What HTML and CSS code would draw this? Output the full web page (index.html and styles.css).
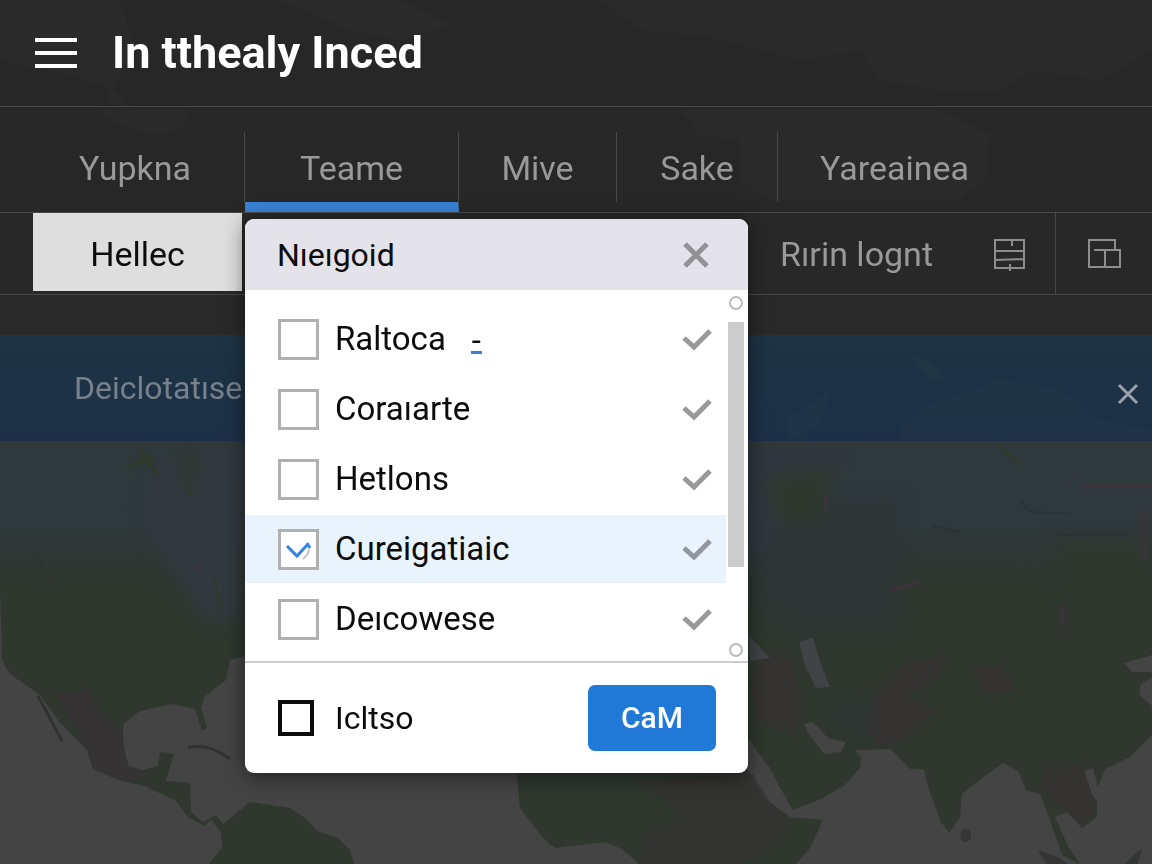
FILE: index.html
```html
<!DOCTYPE html>
<html lang="en">
<head>
    <meta charset="UTF-8">
    <meta name="viewport" content="width=device-width, initial-scale=1.0">
    <title>In tthealy Inced</title>
    <link rel="stylesheet" href="styles.css">
</head>
<body>
    <!-- map behind everything -->
    <svg class="map" viewBox="0 0 1152 864" preserveAspectRatio="xMidYMin slice" aria-hidden="true">
        <defs>
            <linearGradient id="north" x1="0" y1="0" x2="0" y2="1">
                <stop offset="0" stop-color="#30393c"/>
                <stop offset="0.75" stop-color="#2f383b"/>
                <stop offset="1" stop-color="#2f372f"/>
            </linearGradient>
            <filter id="soft" x="-20%" y="-20%" width="140%" height="140%" color-interpolation-filters="sRGB">
                <feGaussianBlur stdDeviation="8"/>
            </filter>
        </defs>
        <rect width="1152" height="864" fill="#444444"/>
        <path fill="#7a7a7a" d="M0 0H120L135 50L105 100L130 110L115 90L70 75L0 60ZM280 0H400L450 25L400 40L350 30ZM600 0H1152V50L1100 80L1030 70L1000 90H940L880 80L860 50L800 60L700 35L640 30ZM680 110H940L990 135L985 180L960 200H860L770 200L740 180L740 140L700 135ZM95 110H190L180 130L150 135L120 125Z"/>
        <rect y="330" width="1152" height="260" fill="url(#north)"/>
        <path fill="#4b5638" d="M900 430L930 405L960 395L1000 380L1060 390L1100 420L1152 430V440H900ZM908 355L930 362L945 378L930 380ZM785 420L810 405L830 390L820 425L790 440Z"/>
        <path fill="#2f372f" d="M0 588H250V655L230 660L226 680L204 697L201 708L207 728L202 731L195 709L172 704L140 711L124 723L122 745L129 766L143 770L158 766L160 752L174 754L166 781L190 783L191 812L203 822L216 815L223 824L250 802L290 808L305 818L317 831L338 838L350 850L354 864H209L222 848L221 832L211 820L204 826L188 817L176 801L145 786L118 780L93 769L87 750L60 723L40 695L10 674L2 660Z"/>
        <path fill="#353333" d="M55 692L88 690L100 712L122 732L127 765L150 778L120 780L93 769L87 748Z"/>
        <path fill="none" stroke="#303332" stroke-width="3" d="M38 696L62 741M188 748Q208 742 230 759M37 557L51 580"/>
        <path fill="#2f372f" d="M740 585H1152V735L1130 757L1105 769L1098 787L1093 768L1082 772L1083 786L1097 801L1097 817L1082 828L1067 812L1055 817L1068 846L1080 864L1062 855L1050 820L1040 794L1026 790L1018 771L1003 763L982 778L962 794L960 817L949 833L941 822L929 790L924 769L910 769L891 749L862 750L845 748L848 742L861 757L860 768L845 785L821 799L793 810L783 793L768 768L750 740L740 748Z"/>
        <path fill="#2f372f" d="M516 770H748L764 798L790 817L823 820L810 848L796 864H639L622 849L605 842L555 848L543 838L520 808Z"/>
        <path fill="#353232" d="M640 780L755 774L770 802L788 820L778 840L740 864H640L645 835L690 820Z" opacity=".7"/>
        <path fill="#353332" d="M765 655L790 658L800 700L795 735L758 720L750 680ZM870 700L902 665L945 655L937 675L910 696L935 711L910 735L880 748L865 725ZM975 668L1000 665L1016 690L985 695ZM1045 768L1082 765L1097 808L1082 826L1058 803L1040 790Z"/>
        <g filter="url(#soft)">
            <path fill="#2d3536" d="M835 700H875V735L848 733L830 725ZM750 500H900V630L800 635L750 610Z" opacity=".7"/>
            <path fill="#31393f" d="M165 450H240V620H205L150 535L145 500Z"/>
            <path fill="#31363f" d="M750 450H840L800 515L770 540L750 570Z"/>
            <path fill="#2f382f" d="M765 475L830 465L825 520L775 525ZM1057 540H1152V600H1060ZM175 450H195V490H185Z"/>
        </g>
        <path fill="#404446" d="M799 642L813 638L820 662L830 687L816 688L804 663ZM748 635L770 658L750 661Z"/>
        <path fill="#444444" d="M748 740L770 768L792 812L770 800L755 779ZM804 724L813 722L828 738L846 742L841 752L824 754L808 733ZM1124 663L1152 655V672H1132ZM1140 685L1152 678V706L1140 695Z"/>
        <path fill="#333635" d="M962 830Q972 826 971 839Q965 846 960 838ZM1038 850L1060 858L1068 864H1046ZM1124 864L1142 848L1138 864Z"/>
        <path fill="none" stroke="#2f3a2b" stroke-width="3" d="M995 443L1020 464M128 467L150 455M140 450L158 475M135 463L155 460M214 577L220 610M185 485L192 495"/>
        <path fill="none" stroke="#2b3238" stroke-width="2" d="M1022 500Q1025 514 1045 513H1068M932 526L960 532M785 530H815M1056 535H1130"/>
        <path fill="none" stroke="#3a343a" stroke-width="4" d="M1083 486H1152M890 590L920 582M1062 604V625M826 495V510M198 562V574M1144 510V560"/>
    </svg>

    <header class="header">
        <button class="menu-button" type="button" aria-label="Menu">
            <span></span>
            <span></span>
            <span></span>
        </button>
        <h1 class="title">In tthealy Inced</h1>
    </header>

    <nav class="tabs">
        <a class="tab" href="#">Yupkna</a>
        <a class="tab tab-active" href="#">Teame</a>
        <a class="tab" href="#">Mive</a>
        <a class="tab" href="#">Sake</a>
        <a class="tab" href="#">Yareainea</a>

        <section class="popup" aria-labelledby="popup-title">
            <div class="popup-header">
                <h2 class="popup-title" id="popup-title">Nıeıgoid</h2>
                <button class="close-button" type="button" aria-label="Close">
                    <svg width="26" height="26" viewBox="0 0 26 26"><path d="M2 2L24 24M24 2L2 24" stroke="#919196" stroke-width="5"/></svg>
                </button>
            </div>

            <div class="popup-body">
                <div class="options">
                    <label class="option">
                        <input class="checkbox" type="checkbox">
                        <span>Raltoca</span>
                        <span class="mark">-</span>
                        <svg class="tick" width="30" height="24" viewBox="0 0 30 24"><path d="M2 11L12 20L28 4" fill="none" stroke="#999" stroke-width="5"/></svg>
                    </label>
                    <label class="option">
                        <input class="checkbox" type="checkbox">
                        <span>Coraıarte</span>
                        <svg class="tick" width="30" height="24" viewBox="0 0 30 24"><path d="M2 11L12 20L28 4" fill="none" stroke="#999" stroke-width="5"/></svg>
                    </label>
                    <label class="option">
                        <input class="checkbox" type="checkbox">
                        <span>Hetlons</span>
                        <svg class="tick" width="30" height="24" viewBox="0 0 30 24"><path d="M2 11L12 20L28 4" fill="none" stroke="#999" stroke-width="5"/></svg>
                    </label>
                    <label class="option option-selected">
                        <input class="checkbox" type="checkbox" checked>
                        <svg class="check" width="41" height="41" viewBox="0 0 41 41">
                            <path d="M9 17L19 27L30 15M29 14L32 19" fill="none" stroke="#3585dc" stroke-width="3"/>
                            <path d="M31 20Q31 25 25 30" fill="none" stroke="#c5c2c6" stroke-width="2"/>
                        </svg>
                        <span>Cureigatiaic</span>
                        <svg class="tick" width="30" height="24" viewBox="0 0 30 24"><path d="M2 11L12 20L28 4" fill="none" stroke="#92979d" stroke-width="5"/></svg>
                    </label>
                    <label class="option">
                        <input class="checkbox" type="checkbox">
                        <span>Deıcowese</span>
                        <svg class="tick" width="30" height="24" viewBox="0 0 30 24"><path d="M2 11L12 20L28 4" fill="none" stroke="#999" stroke-width="5"/></svg>
                    </label>
                </div>
                <div class="scrollbar" aria-hidden="true">
                    <span class="scroll-end"></span>
                    <span class="scroll-thumb"></span>
                    <span class="scroll-end"></span>
                </div>
            </div>

            <div class="popup-footer">
                <label class="footer-option">
                    <input class="checkbox checkbox-dark" type="checkbox">
                    <span>Icltso</span>
                </label>
                <button class="submit-button" type="button">CaM</button>
            </div>
        </section>
    </nav>

    <div class="toolbar">
        <button class="filter-button" type="button">Hellec</button>
        <span class="toolbar-text">Rırin lognt</span>
        <button class="icon-button" type="button" aria-label="Rows">
            <svg width="34" height="34" viewBox="0 0 34 34" fill="none" stroke="#8d8d8d" stroke-width="2">
                <path d="M2 3H31V31H2ZM2 14H31M2 23L31 22M19 3V9M17 27V34"/>
            </svg>
        </button>
        <button class="icon-button icon-button-last" type="button" aria-label="Layout">
            <svg width="34" height="34" viewBox="0 0 34 34" fill="none" stroke="#8d8d8d" stroke-width="2">
                <path d="M27 13V3H1V30H32V13H6M17 13V31"/>
            </svg>
        </button>
    </div>

    <div class="banner">
        <span>Deiclotatıse</span>
        <button class="close-button" type="button" aria-label="Dismiss">
            <svg width="22" height="22" viewBox="0 0 22 22"><path d="M2 2L20 20M20 2L2 20" stroke="#9aa1a8" stroke-width="3"/></svg>
        </button>
    </div>
</body>
</html>
```
FILE: styles.css
```css
* {
    box-sizing: border-box;
}

body {
    font-family: Roboto, 'Liberation Sans', sans-serif;
    font-size: 32px;
    line-height: 40px;
    background-color: #444;
    color: #999;
    min-height: 100vh;
    margin: 0;
    position: relative;
    overflow: hidden;
}

button {
    font: inherit;
    color: inherit;
    background: none;
    border: none;
    padding: 0;
    cursor: pointer;
}

svg {
    display: block;
}

.map {
    position: absolute;
    top: 0;
    left: 0;
    width: 100%;
    height: 100%;
    z-index: -1;
}

.header {
    display: flex;
    align-items: center;
    gap: 35px;
    height: 107px;
    padding: 0 35px;
    background-color: rgba(37, 37, 37, 0.94);
    border-bottom: 1px solid #484848;
}

.menu-button {
    display: flex;
    flex-direction: column;
    gap: 9px;
    width: 42px;
}

.menu-button span {
    height: 4px;
    background-color: #fff;
}

.title {
    margin: 0;
    font-size: 45px;
    font-weight: 700;
    color: #fff;
}

.tabs {
    position: relative;
    display: grid;
    grid-template-columns: 245px 214px 158px 161px auto;
    justify-content: start;
    padding-top: 25px;
    background-color: rgba(37, 37, 37, 0.94);
    border-bottom: 1px solid #484848;
}

.tab {
    padding: 16px 0 14px;
    margin-bottom: 10px;
    border-right: 1px solid #484848;
    color: #999;
    font-size: 34px;
    text-align: center;
    text-decoration: none;
}

.tab:first-child {
    padding-left: 26px;
}

.tab:nth-child(5) {
    padding-left: 42px;
    border-right: none;
}

.tab-active {
    margin-bottom: 0;
    border-bottom: 10px solid #3881d2;
}

.popup {
    position: absolute;
    top: 112px;
    left: 245px;
    width: 503px;
    border-radius: 9px;
    background-color: #fff;
    color: #0c0c0c;
    box-shadow: 0 4px 20px rgba(0, 0, 0, 0.5);
    z-index: 1;
}

.popup-header {
    display: flex;
    align-items: center;
    justify-content: space-between;
    height: 71px;
    padding: 0 39px 0 32px;
    border-radius: 9px 9px 0 0;
    background-color: #e4e3e9;
}

.popup-title {
    margin: 0;
    font-size: 32px;
    font-weight: 400;
}

.popup-body {
    display: flex;
    justify-content: space-between;
    border-bottom: 2px solid #ccc;
}

.options {
    display: flex;
    flex-direction: column;
    flex: 1;
    gap: 2px;
    padding: 15px 0 8px;
}

.option {
    position: relative;
    display: flex;
    align-items: center;
    height: 68px;
    padding: 0 14px 0 33px;
    font-size: 33px;
    line-height: 42px;
}

.option-selected {
    background-color: #e8f3fe;
}

.checkbox {
    appearance: none;
    width: 41px;
    height: 41px;
    margin: 0 16px 0 0;
    border: 3px solid #b0b0b0;
    background-color: #fff;
}

.check {
    position: absolute;
    left: 33px;
    pointer-events: none;
}

.mark {
    margin-left: 25px;
    padding: 0 1px;
    height: 30px;
    line-height: 34px;
    border-bottom: 3px solid #3881d2;
}

.tick {
    margin-left: auto;
}

.scrollbar {
    display: flex;
    flex-direction: column;
    align-items: center;
    justify-content: space-between;
    width: 22px;
    padding: 6px 4px 4px 2px;
}

.scroll-end {
    width: 14px;
    height: 14px;
    border: 2px solid #bbb;
    border-radius: 50%;
}

.scroll-thumb {
    width: 16px;
    height: 245px;
    margin-bottom: 64px;
    background-color: #ccc;
}

.popup-footer {
    display: flex;
    align-items: center;
    justify-content: space-between;
    height: 110px;
    padding: 0 32px 0 33px;
}

.footer-option {
    display: flex;
    align-items: center;
}

.checkbox-dark {
    width: 36px;
    height: 36px;
    margin-right: 21px;
    border: 4px solid #0c0c0c;
}

.submit-button {
    width: 128px;
    height: 66px;
    border-radius: 7px;
    background-color: #2179d7;
    color: #fff;
    font-size: 30px;
    font-weight: 500;
}

.toolbar {
    display: flex;
    align-items: center;
    height: 82px;
    padding-left: 33px;
    background-color: #282828;
    border-bottom: 1px solid #484848;
}

.filter-button {
    align-self: flex-start;
    width: 209px;
    height: 78px;
    margin-right: auto;
    padding-top: 4px;
    background-color: #dedede;
    color: #0c0c0c;
    font-size: 34px;
}

.toolbar-text {
    min-width: 163px;
    font-size: 34px;
}

.icon-button {
    display: flex;
    align-items: center;
    height: 100%;
    padding: 0 28px 0 50px;
    border-right: 1px solid #484848;
}

.icon-button-last {
    padding: 0 30px 0 32px;
    border-right: none;
}

.banner {
    display: flex;
    align-items: center;
    justify-content: space-between;
    height: 146px;
    padding: 40px 13px 0 74px;
    background: linear-gradient(#2a2929 40px, rgba(27, 50, 68, 0.88) 40px, rgba(27, 46, 73, 0.88));
    color: #77818b;
}

.banner .close-button {
    padding-top: 12px;
}
```
